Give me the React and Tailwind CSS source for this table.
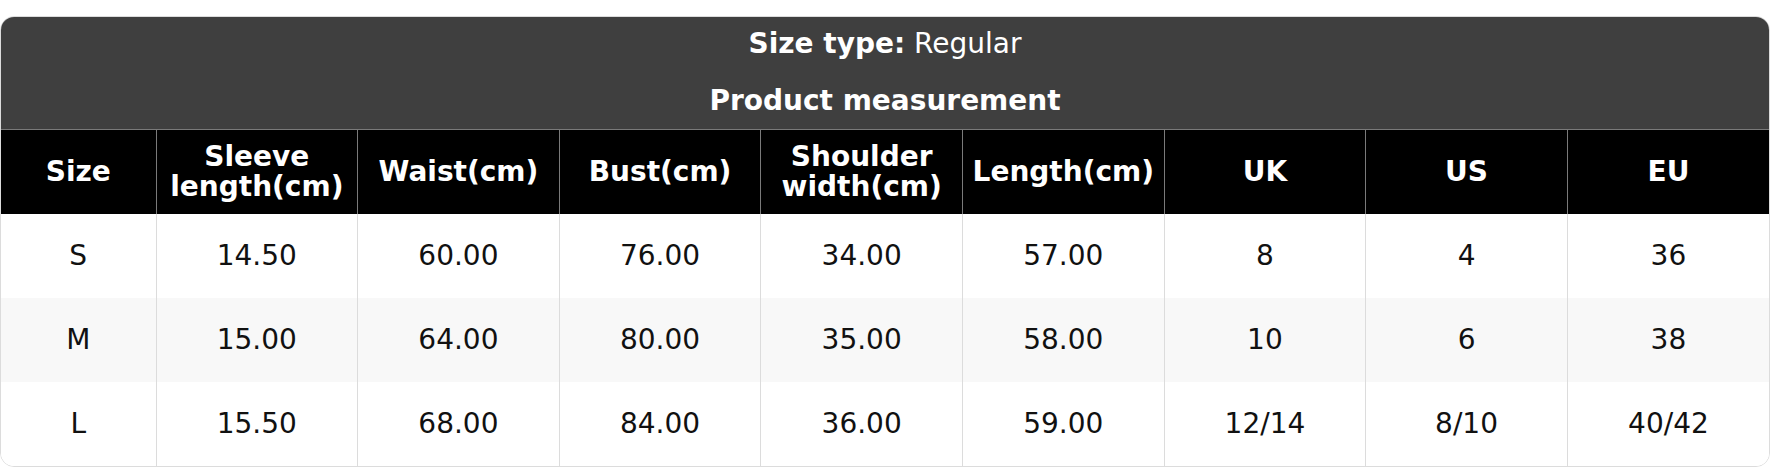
import React from "react";

const headers = [
  ["Size"],
  ["Sleeve", "length(cm)"],
  ["Waist(cm)"],
  ["Bust(cm)"],
  ["Shoulder", "width(cm)"],
  ["Length(cm)"],
  ["UK"],
  ["US"],
  ["EU"],
];

const rows = [
  ["S", "14.50", "60.00", "76.00", "34.00", "57.00", "8", "4", "36"],
  ["M", "15.00", "64.00", "80.00", "35.00", "58.00", "10", "6", "38"],
  ["L", "15.50", "68.00", "84.00", "36.00", "59.00", "12/14", "8/10", "40/42"],
];

export default function App() {
  return (
    <div className="bg-white pt-4" style={{ fontFamily: '"DejaVu Sans", Verdana, sans-serif' }}>
      <div className="w-full overflow-hidden rounded-[14px] border border-[#dcdcdc] bg-white">
        <div className="h-[112px] bg-[#3f3f3f] pt-[12px] text-center text-[28px] leading-[30px] text-white">
          <div>
            <span className="font-bold">Size type:</span> Regular
          </div>
          <div className="mt-[27px] font-bold">Product measurement</div>
        </div>
        <table className="w-full table-fixed border-collapse">
          <colgroup>
            <col className="w-[155px]" />
            <col />
            <col />
            <col />
            <col />
            <col />
            <col />
            <col />
            <col />
          </colgroup>
          <thead>
            <tr className="h-[84px] bg-black">
              {headers.map((h, i) => (
                <th
                  key={i}
                  className={`border-t border-[#7a7a7a] px-1 text-center align-middle text-[28px] font-bold leading-[30px] text-white ${
                    i > 0 ? "border-l" : ""
                  }`}
                >
                  {h.map((line, j) => (
                    <div key={j}>{line}</div>
                  ))}
                </th>
              ))}
            </tr>
          </thead>
          <tbody>
            {rows.map((r, ri) => (
              <tr key={ri} className={`h-[84px] ${ri === 1 ? "bg-[#f8f8f8]" : "bg-white"}`}>
                {r.map((c, ci) => (
                  <td
                    key={ci}
                    className={`text-center align-middle text-[28px] text-[#111] ${
                      ci > 0 ? "border-l border-[#dcdcdc]" : ""
                    }`}
                  >
                    {c}
                  </td>
                ))}
              </tr>
            ))}
          </tbody>
        </table>
      </div>
    </div>
  );
}
